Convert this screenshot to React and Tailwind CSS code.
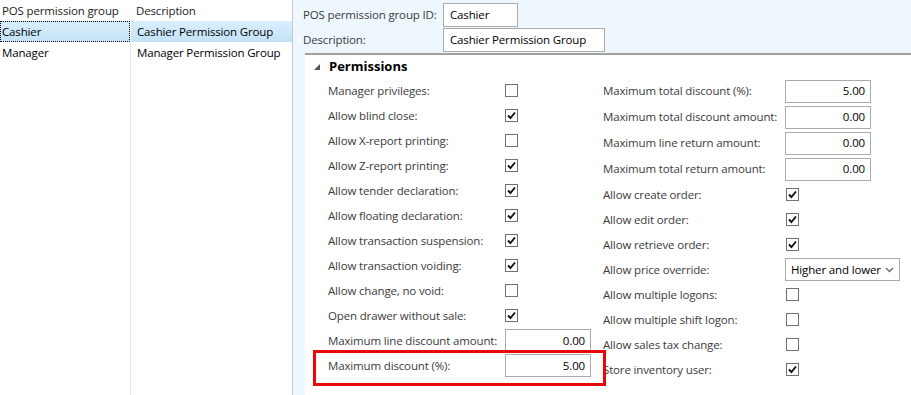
import React from 'react';

const leftRows = [
  { label: 'Manager privileges:', type: 'check', on: false },
  { label: 'Allow blind close:', type: 'check', on: true },
  { label: 'Allow X-report printing:', type: 'check', on: false },
  { label: 'Allow Z-report printing:', type: 'check', on: true },
  { label: 'Allow tender declaration:', type: 'check', on: true },
  { label: 'Allow floating declaration:', type: 'check', on: true },
  { label: 'Allow transaction suspension:', type: 'check', on: true },
  { label: 'Allow transaction voiding:', type: 'check', on: true },
  { label: 'Allow change, no void:', type: 'check', on: false },
  { label: 'Open drawer without sale:', type: 'check', on: true },
  { label: 'Maximum line discount amount:', type: 'num', value: '0.00' },
  { label: 'Maximum discount (%):', type: 'num', value: '5.00' },
];

const rightInputs = [
  { label: 'Maximum total discount (%):', value: '5.00' },
  { label: 'Maximum total discount amount:', value: '0.00' },
  { label: 'Maximum line return amount:', value: '0.00' },
  { label: 'Maximum total return amount:', value: '0.00' },
];

const rightChecks = [
  { label: 'Allow create order:', on: true },
  { label: 'Allow edit order:', on: true },
  { label: 'Allow retrieve order:', on: true },
  { label: 'Allow price override:', select: 'Higher and lower' },
  { label: 'Allow multiple logons:', on: false },
  { label: 'Allow multiple shift logon:', on: false },
  { label: 'Allow sales tax change:', on: false },
  { label: 'Store inventory user:', on: true },
];

function Check({ on }) {
  return (
    <div className="w-[13px] h-[13px] shrink-0 border border-[#707070] bg-white flex items-center justify-center">
      {on && (
        <svg width="9" height="9" viewBox="0 0 9 9">
          <path d="M1 4.5 L3.4 7 L8 1.5" fill="none" stroke="#111" strokeWidth="1.9" />
        </svg>
      )}
    </div>
  );
}

function NumBox({ value }) {
  return (
    <div className="w-[86px] h-[23px] shrink-0 border border-[#ababab] bg-white flex items-center justify-end pr-[5px] text-black">
      {value}
    </div>
  );
}

export default function App() {
  return (
    <div
      className="w-[911px] h-[395px] overflow-hidden bg-white flex text-[11.5px] tracking-[-0.15px] text-[#3b3b3b] whitespace-nowrap"
      style={{ fontFamily: '"Open Sans", "Noto Sans", sans-serif' }}
    >
      {/* group list */}
      <div className="w-[293px] shrink-0 border-r border-[#c8c8c8] flex flex-col">
        <div className="flex h-[21px] items-center text-[#222]">
          <div className="w-[130px] pl-[2px]">POS permission group</div>
          <div className="flex-1 pl-[6px]">Description</div>
        </div>
        <div className="flex h-[21px] items-center text-black">
          <div className="w-[130px] h-full pl-[1px] flex items-center bg-gradient-to-b from-[#d9eefb] to-[#c2e3f8] border border-dotted border-black">
            Cashier
          </div>
          <div className="flex-1 h-full pl-[6px] flex items-center bg-gradient-to-b from-[#d9eefb] to-[#c2e3f8] border-l border-white">
            Cashier Permission Group
          </div>
        </div>
        <div className="flex flex-1">
          <div className="w-[130px] pl-[2px] pt-[2px] text-black">Manager</div>
          <div className="flex-1 pl-[6px] pt-[2px] border-l border-[#dce9f3] text-black">Manager Permission Group</div>
        </div>
      </div>

      {/* details */}
      <div className="flex-1 bg-[#eef6fe] flex flex-col">
        <div className="pl-[10px] pt-[3px] flex flex-col gap-[1px]">
          <div className="flex items-center h-[24px]">
            <span className="w-[140px] shrink-0">POS permission group ID:</span>
            <div className="w-[75px] h-[24px] border border-[#ababab] bg-white flex items-center pl-[6px] text-black">Cashier</div>
          </div>
          <div className="flex items-center h-[24px]">
            <span className="w-[140px] shrink-0">Description:</span>
            <div className="w-[162px] h-[24px] border border-[#ababab] bg-white flex items-center pl-[6px] text-black">Cashier Permission Group</div>
          </div>
        </div>

        <div className="relative flex-1 ml-[12px] mt-[1px] border-t-2 border-[#a0a0a0] bg-white">
          <div className="flex items-center h-[23px] pl-[9px]">
            <svg width="6" height="6" viewBox="0 0 6 6" className="mr-[9px]">
              <path d="M6 0 L6 6 L0 6 Z" fill="#555" />
            </svg>
            <span className="text-[13px] font-bold text-black tracking-normal">Permissions</span>
          </div>

          <div className="flex pl-[23px]">
            <div className="w-[275px] shrink-0 flex flex-col">
              {leftRows.map((r) => (
                <div key={r.label} className="flex items-center h-[25px]">
                  <span className="w-[177px] shrink-0">{r.label}</span>
                  {r.type === 'check' ? <Check on={r.on} /> : <NumBox value={r.value} />}
                </div>
              ))}
            </div>
            <div className="flex flex-col">
              {rightInputs.map((r) => (
                <div key={r.label} className="flex items-center h-[26px]">
                  <span className="w-[182px] shrink-0">{r.label}</span>
                  <NumBox value={r.value} />
                </div>
              ))}
              {rightChecks.map((r) => (
                <div key={r.label} className="flex items-center h-[25px]">
                  <span className="w-[182px] shrink-0">{r.label}</span>
                  {r.select ? (
                    <div className="w-[115px] h-[23px] shrink-0 border border-[#ababab] bg-white flex items-center justify-between pl-[5px] pr-[5px] text-black">
                      <span>{r.select}</span>
                      <svg width="9" height="6" viewBox="0 0 9 6">
                        <path d="M1 1 L4.5 4.5 L8 1" fill="none" stroke="#666" strokeWidth="1.3" />
                      </svg>
                    </div>
                  ) : (
                    <div className="pl-[1px]"><Check on={r.on} /></div>
                  )}
                </div>
              ))}
            </div>
          </div>

          {/* annotation */}
          <div className="absolute left-[8px] top-[295px] w-[293px] h-[36px] border-[3px] border-[#e8060a] pointer-events-none" />
        </div>
      </div>
    </div>
  );
}
